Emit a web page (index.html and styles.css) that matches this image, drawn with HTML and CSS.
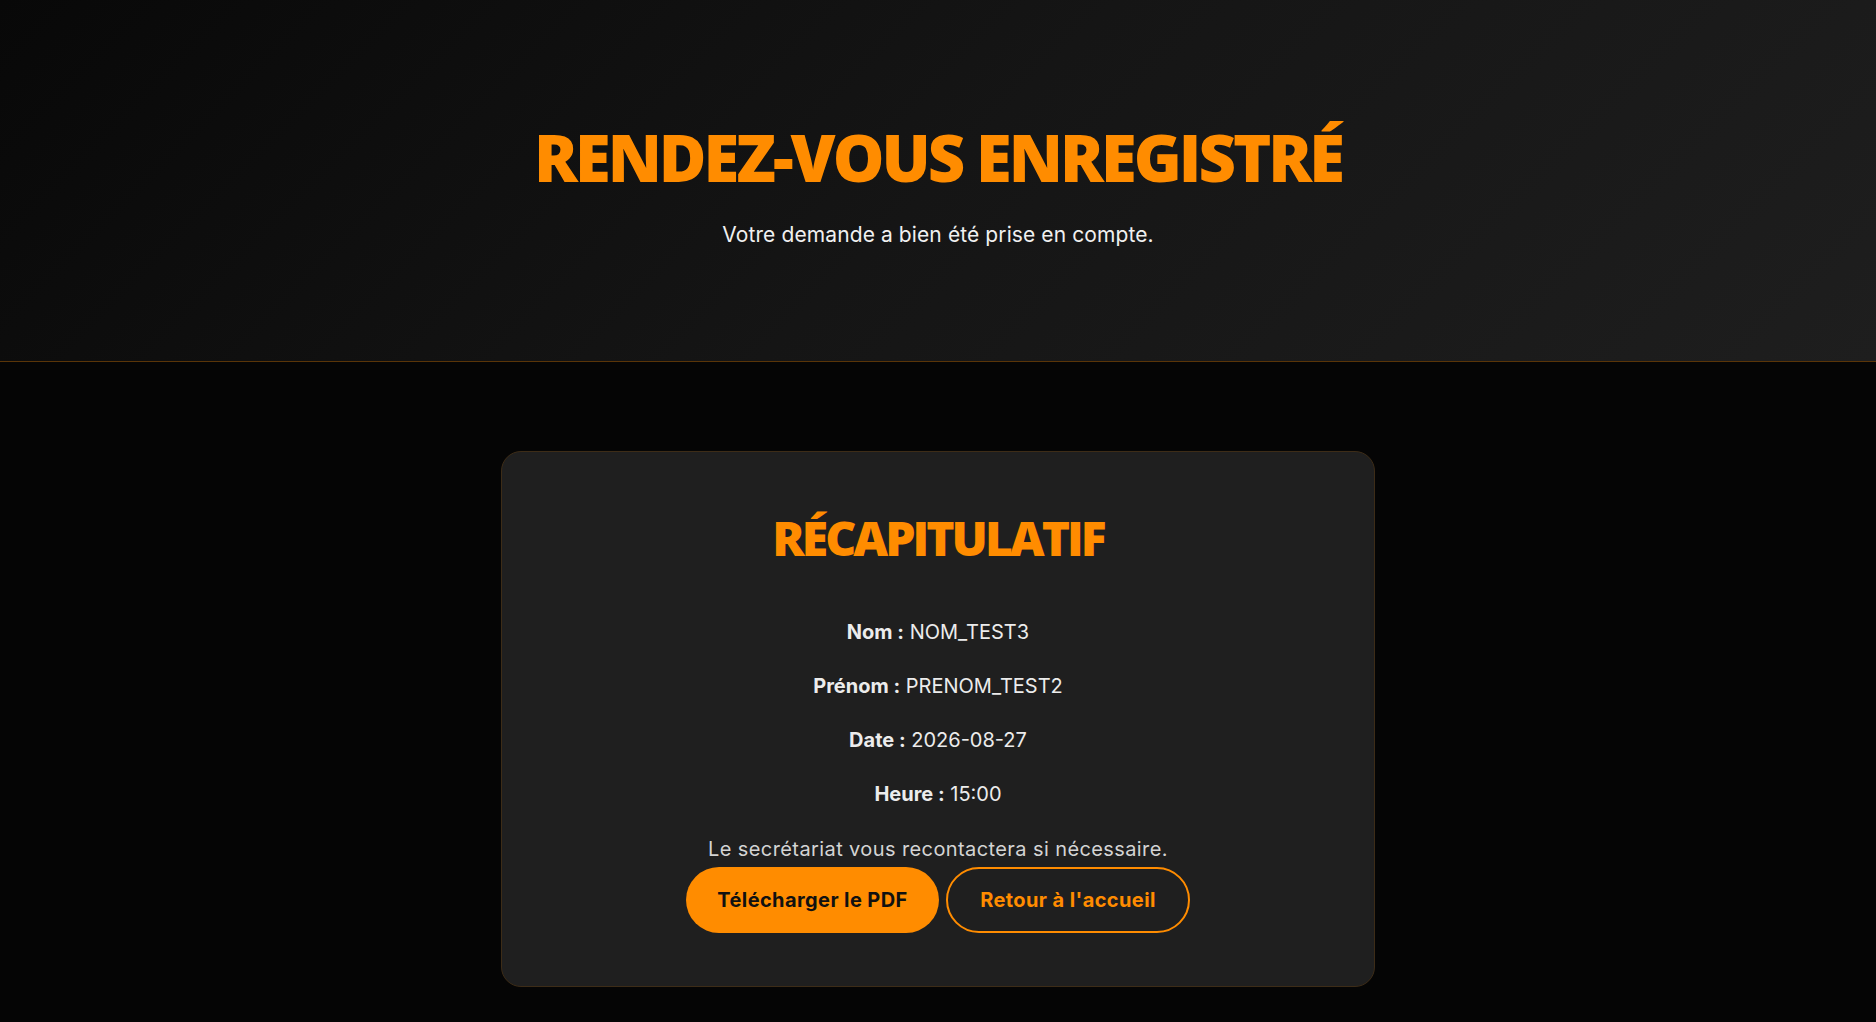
FILE: index.html
```html
<!DOCTYPE html>
<html lang="fr">
<head>
<meta charset="utf-8">
<title>Rendez-vous enregistré</title>
<link rel="stylesheet" href="styles.css">
</head>
<body>
<header class="hero">
  <h1 class="hero-title">RENDEZ-VOUS ENREGISTRÉ</h1>
  <p class="hero-sub">Votre demande a bien été prise en compte.</p>
</header>
<main class="main">
  <section class="card">
    <h2 class="card-title">RÉCAPITULATIF</h2>
    <div class="rows">
      <p class="row"><strong>Nom :</strong> NOM_TEST3</p>
      <p class="row"><strong>Prénom :</strong> PRENOM_TEST2</p>
      <p class="row"><strong>Date :</strong> 2026-08-27</p>
      <p class="row"><strong>Heure :</strong> 15:00</p>
    </div>
    <p class="note">Le secrétariat vous recontactera si nécessaire.</p>
    <div class="actions">
      <a class="btn btn-primary" href="#">Télécharger le PDF</a>
      <a class="btn btn-outline" href="#">Retour à l'accueil</a>
    </div>
  </section>
</main>
</body>
</html>
```
FILE: styles.css
```css
html, body {
  margin: 0;
  padding: 0;
  background: #050505;
  font-family: Inter, "Open Sans", sans-serif;
  color: #ececec;
  height: 100%;
}

.hero {
  box-sizing: border-box;
  height: 362px;
  background: linear-gradient(135deg, #080808 0%, #151515 50%, #1e1e1e 100%);
  border-bottom: 1px solid #5a3508;
  display: flex;
  flex-direction: column;
  align-items: center;
  padding-top: 112px;
}

.hero-title {
  margin: 0;
  font-family: "Open Sans", sans-serif;
  font-size: 65px;
  line-height: 90px;
  font-weight: 800;
  color: #ff8c00;
  letter-spacing: -3px;
}

.hero-sub {
  margin: 18px 0 0;
  font-size: 21px;
  line-height: 30px;
  letter-spacing: 0.1px;
  color: #f0f0f0;
}

.main {
  display: flex;
  justify-content: center;
  padding-top: 89px;
}

.card {
  box-sizing: border-box;
  width: 874px;
  height: 536px;
  background: #1f1f1f;
  border: 1px solid #3d2c17;
  border-radius: 20px;
  display: flex;
  flex-direction: column;
  align-items: center;
  padding-top: 56px;
}

.card-title {
  margin: 0;
  font-family: "Open Sans", sans-serif;
  font-size: 48px;
  line-height: 60px;
  font-weight: 800;
  color: #ff8c00;
  letter-spacing: -3px;
}

.rows {
  margin-top: 49px;
  display: flex;
  flex-direction: column;
  align-items: center;
  gap: 24px;
}

.row {
  margin: 0;
  font-size: 20px;
  line-height: 30px;
  color: #ececec;
}

.row strong {
  font-weight: 700;
}

.note {
  margin: 26px 0 0;
  font-size: 20px;
  line-height: 28px;
  letter-spacing: 0.4px;
  color: #d4d4d4;
}

.actions {
  display: flex;
  gap: 7px;
  margin-top: 4px;
}

.btn {
  box-sizing: border-box;
  height: 66px;
  display: flex;
  align-items: center;
  justify-content: center;
  border-radius: 33px;
  font-size: 20px;
  font-weight: 700;
  letter-spacing: 0.4px;
  text-decoration: none;
}

.btn-primary {
  width: 253px;
  background: #ff8c00;
  color: #111;
}

.btn-outline {
  width: 244px;
  border: 2px solid #ff8c00;
  color: #ff8c00;
  background: transparent;
}
```
